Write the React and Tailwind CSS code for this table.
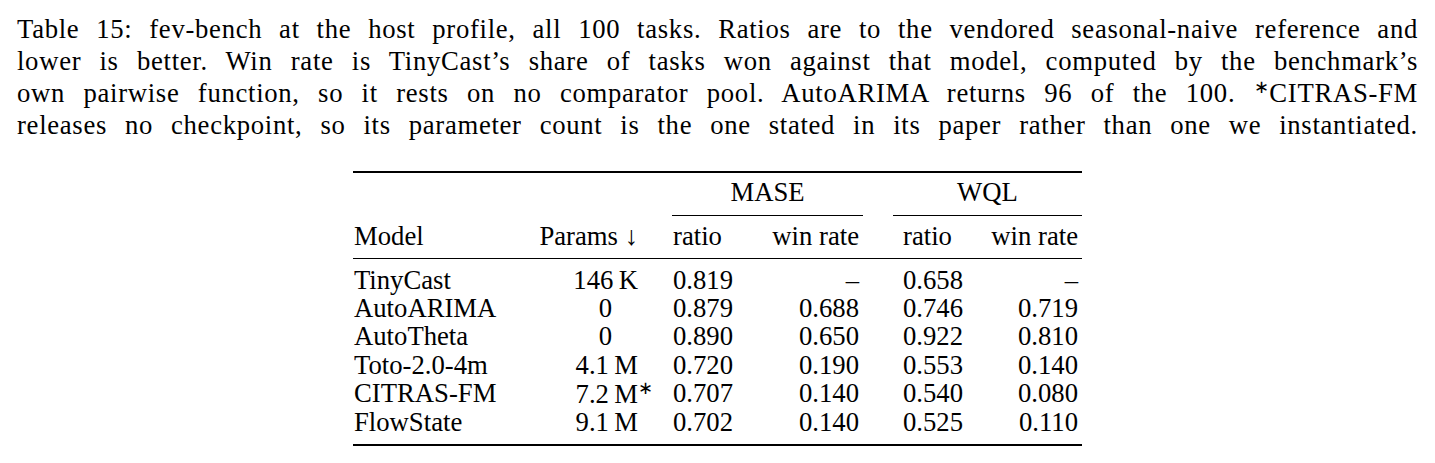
import React from "react";

const lines = [
  "Table 15: fev-bench at the host profile, all 100 tasks. Ratios are to the vendored seasonal-naive reference and",
  "lower is better. Win rate is TinyCast\u2019s share of tasks won against that model, computed by the benchmark\u2019s",
  null,
  "releases no checkpoint, so its parameter count is the one stated in its paper rather than one we instantiated.",
];

const rows = [
  ["TinyCast", "146\u2009K", "0.819", "\u2013", "0.658", "\u2013"],
  ["AutoARIMA", "0", "0.879", "0.688", "0.746", "0.719"],
  ["AutoTheta", "0", "0.890", "0.650", "0.922", "0.810"],
  ["Toto-2.0-4m", "4.1\u2009M", "0.720", "0.190", "0.553", "0.140"],
  ["CITRAS-FM", "7.2\u2009M*", "0.707", "0.140", "0.540", "0.080"],
  ["FlowState", "9.1\u2009M", "0.702", "0.140", "0.525", "0.110"],
];

function Params({ v }) {
  if (v === "0") return <div className="text-right pr-[43px]">0</div>;
  if (v.endsWith("*"))
    return (
      <div className="text-right pr-[17px] whitespace-nowrap">
        {v.slice(0, -1)}
        <span className="inline-block w-0 align-[9px] text-[18px] leading-none">{"\u2217"}</span>
      </div>
    );
  return <div className="text-right pr-[17px] whitespace-nowrap">{v}</div>;
}

export default function App() {
  return (
    <div className="w-[1435px] h-[463px] bg-white text-black font-['Liberation_Serif',serif] text-[26.7px] overflow-hidden">
      <div className="mx-auto w-[1401px] pt-[13px] leading-[32px] tracking-[0.7px]">
        {lines.map((l, i) =>
          l ? (
            <div key={i} className="text-justify [text-align-last:justify]">
              {l}
            </div>
          ) : (
            <div key={i} className="text-justify [text-align-last:justify]">
              own pairwise function, so it rests on no comparator pool. AutoARIMA returns 96 of the 100.{" "}
              <span className="align-[9px] text-[18px] leading-none">{"\u2217"}</span>CITRAS-FM
            </div>
          )
        )}
      </div>

      <div className="mx-auto mt-[30px] w-[729px] grid grid-cols-[167px_135px_95px_113px_107px_112px] leading-[28.2px]">
        <div className="col-span-6 h-[2px] bg-black" />

        <div className="col-span-2 h-[43px]" />
        <div className="col-span-2 ml-[17px] h-[43px] border-b border-black pt-[5px] text-center">MASE</div>
        <div className="col-span-2 ml-[30px] h-[43px] border-b border-black pt-[5px] text-center">WQL</div>

        <div className="h-[42px] pt-[6px] pl-[1px]">Model</div>
        <div className="h-[42px] pt-[6px] pr-[17px] text-right whitespace-nowrap">Params {"\u2193"}</div>
        <div className="h-[42px] pt-[6px] pl-[18px]">ratio</div>
        <div className="h-[42px] pt-[6px] pr-[4px] text-right whitespace-nowrap">win rate</div>
        <div className="h-[42px] pt-[6px] pl-[40px]">ratio</div>
        <div className="h-[42px] pt-[6px] pr-[4px] text-right whitespace-nowrap">win rate</div>

        <div className="col-span-6 h-[1px] bg-black" />
        <div className="col-span-6 h-[7px]" />

        {rows.map((r) => (
          <React.Fragment key={r[0]}>
            <div className="pl-[1px] whitespace-nowrap">{r[0]}</div>
            <Params v={r[1]} />
            <div className="pl-[18px]">{r[2]}</div>
            <div className="pr-[4px] text-right">{r[3]}</div>
            <div className="pl-[40px]">{r[4]}</div>
            <div className="pr-[4px] text-right">{r[5]}</div>
          </React.Fragment>
        ))}

        <div className="col-span-6 h-[7.5px]" />
        <div className="col-span-6 h-[2px] bg-black" />
      </div>
    </div>
  );
}
